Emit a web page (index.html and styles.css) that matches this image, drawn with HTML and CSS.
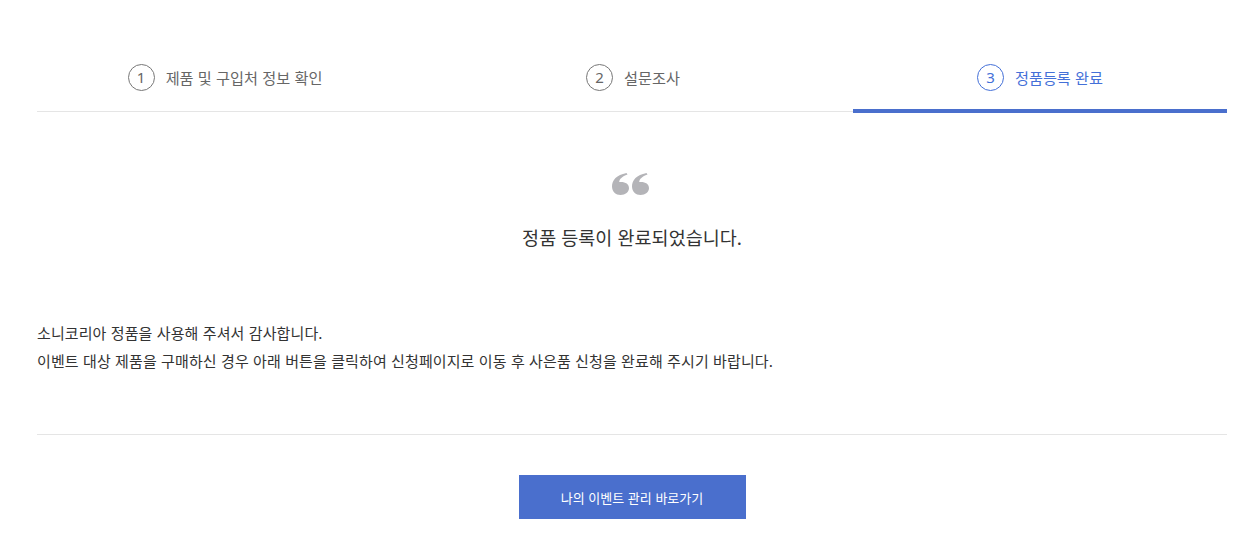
FILE: index.html
```html
<!DOCTYPE html>
<html lang="ko">
<head>
<meta charset="utf-8">
<title>정품등록 완료</title>
<link rel="stylesheet" href="styles.css">
</head>
<body>
<div class="page">
  <ol class="steps">
    <li class="step"><span class="num">1</span><span class="label">제품 및 구입처 정보 확인</span></li>
    <li class="step"><span class="num">2</span><span class="label">설문조사</span></li>
    <li class="step active"><span class="num">3</span><span class="label">정품등록 완료</span></li>
  </ol>
  <section class="done">
    <svg class="quote" width="37" height="22" viewBox="0 0 37 22" aria-hidden="true">
      <path d="M8.5 22C3.8 22 0 18.5 0 13.5C0 7 4.5 2 14.5 0L15.5 1.5C10 3.5 7.5 6 7.2 9C13 8.5 17 10.5 17 15.3C17 19 13.5 22 8.5 22Z"/>
      <path transform="translate(20 0)" d="M8.5 22C3.8 22 0 18.5 0 13.5C0 7 4.5 2 14.5 0L15.5 1.5C10 3.5 7.5 6 7.2 9C13 8.5 17 10.5 17 15.3C17 19 13.5 22 8.5 22Z"/>
    </svg>
    <h2 class="title">정품 등록이 완료되었습니다.</h2>
  </section>
  <div class="message">
    <p>소니코리아 정품을 사용해 주셔서 감사합니다.</p>
    <p>이벤트 대상 제품을 구매하신 경우 아래 버튼을 클릭하여 신청페이지로 이동 후 사은품 신청을 완료해 주시기 바랍니다.</p>
  </div>
  <div class="actions">
    <a class="btn" href="#">나의 이벤트 관리 바로가기</a>
  </div>
</div>
</body>
</html>
```
FILE: styles.css
```css
* { box-sizing: border-box; }
html, body { margin: 0; padding: 0; background: #fff; }
body {
  font-family: "Noto Sans CJK KR", "Noto Sans", sans-serif;
  color: #333;
}
.page {
  margin: 0 24px 0 37px;
  padding-top: 44px;
}
.steps {
  list-style: none;
  margin: 0;
  padding: 0;
  display: grid;
  grid-template-columns: 376px 1fr 374px;
  align-items: start;
}
.step {
  display: flex;
  align-items: center;
  justify-content: center;
  gap: 11px;
  padding: 20px 0 20px;
  border-bottom: 1px solid #e5e5e5;
  color: #666;
}
.step.active {
  color: #4470d8;
  border-bottom: 4px solid #4a6fcd;
  padding-bottom: 18px;
}
.num {
  width: 27px;
  height: 27px;
  border: 1px solid #777;
  border-radius: 50%;
  display: flex;
  align-items: center;
  justify-content: center;
  font-family: "Noto Sans", sans-serif;
  font-size: 15px;
  line-height: 1;
}
.step.active .num { border-color: #4470d8; }
.label {
  font-size: 15.2px;
  line-height: 27px;
}
.done {
  text-align: center;
  padding-top: 60px;
}
.quote {
  display: block;
  margin: 0 auto;
  fill: #b4b4b8;
  transform: translateX(-2px);
}
.title {
  margin: 0;
  padding-top: 29px;
  font-size: 18.5px;
  font-weight: normal;
  line-height: 26px;
  color: #333;
}
.message {
  padding: 69px 0 59px;
  border-bottom: 1px solid #e5e5e5;
}
.message p {
  margin: 0;
  font-size: 15px;
  letter-spacing: 0.1px;
  line-height: 28px;
  color: #333;
}
.actions {
  display: flex;
  justify-content: center;
  padding: 40px 0 0;
}
.btn {
  display: flex;
  align-items: center;
  justify-content: center;
  width: 227px;
  height: 44px;
  background: #4a6fcd;
  color: #fff;
  font-size: 13px;
  text-decoration: none;
}
```
